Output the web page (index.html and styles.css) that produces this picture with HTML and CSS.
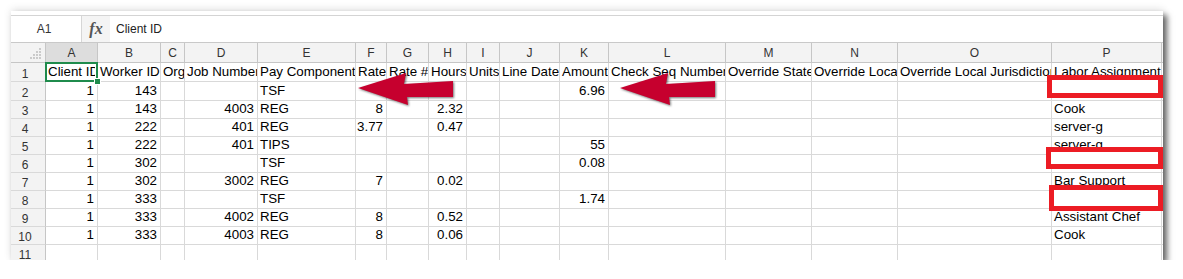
FILE: index.html
```html
<!DOCTYPE html>
<html lang="en">
<head>
<meta charset="utf-8">
<title>Sheet</title>
<link rel="stylesheet" href="styles.css">
</head>
<body>
<div class="sheet">
  <div class="topstrip"></div>
  <div class="fbar">
    <div class="namebox">A1</div>
    <div class="fx">fx</div>
    <div class="fval">Client ID</div>
  </div>
  <div class="grid">
    <div class="corner"><svg width="16" height="13" viewBox="0 0 16 13"><g fill="#b8b8b8"><circle cx="13" cy="2" r="0.9"/><circle cx="10" cy="5" r="0.9"/><circle cx="13" cy="5" r="0.9"/><circle cx="7" cy="8" r="0.9"/><circle cx="10" cy="8" r="0.9"/><circle cx="13" cy="8" r="0.9"/><circle cx="4" cy="11" r="0.9"/><circle cx="7" cy="11" r="0.9"/><circle cx="10" cy="11" r="0.9"/><circle cx="13" cy="11" r="0.9"/></g></svg></div>
    <div class="ch sel">A</div><div class="ch">B</div><div class="ch">C</div><div class="ch">D</div><div class="ch">E</div><div class="ch">F</div><div class="ch">G</div><div class="ch">H</div><div class="ch">I</div><div class="ch">J</div><div class="ch">K</div><div class="ch">L</div><div class="ch">M</div><div class="ch">N</div><div class="ch">O</div><div class="ch">P</div><div class="ch"></div>

    <div class="rh">1</div><div class="c active"><span class="t">Client ID</span></div><div class="c">Worker ID</div><div class="c">Org</div><div class="c">Job Number</div><div class="c">Pay Component</div><div class="c">Rate</div><div class="c">Rate #</div><div class="c">Hours</div><div class="c">Units</div><div class="c">Line Date</div><div class="c">Amount</div><div class="c">Check Seq Number</div><div class="c">Override State</div><div class="c">Override Local</div><div class="c">Override Local Jurisdiction</div><div class="c">Labor Assignment</div><div class="c"></div>

    <div class="rh">2</div><div class="c n">1</div><div class="c n">143</div><div class="c"></div><div class="c"></div><div class="c">TSF</div><div class="c"></div><div class="c"></div><div class="c"></div><div class="c"></div><div class="c"></div><div class="c n">6.96</div><div class="c"></div><div class="c"></div><div class="c"></div><div class="c"></div><div class="c"></div><div class="c"></div>

    <div class="rh">3</div><div class="c n">1</div><div class="c n">143</div><div class="c"></div><div class="c n">4003</div><div class="c">REG</div><div class="c n">8</div><div class="c"></div><div class="c n">2.32</div><div class="c"></div><div class="c"></div><div class="c"></div><div class="c"></div><div class="c"></div><div class="c"></div><div class="c"></div><div class="c">Cook</div><div class="c"></div>

    <div class="rh">4</div><div class="c n">1</div><div class="c n">222</div><div class="c"></div><div class="c n">401</div><div class="c">REG</div><div class="c n">3.77</div><div class="c"></div><div class="c n">0.47</div><div class="c"></div><div class="c"></div><div class="c"></div><div class="c"></div><div class="c"></div><div class="c"></div><div class="c"></div><div class="c">server-g</div><div class="c"></div>

    <div class="rh">5</div><div class="c n">1</div><div class="c n">222</div><div class="c"></div><div class="c n">401</div><div class="c">TIPS</div><div class="c"></div><div class="c"></div><div class="c"></div><div class="c"></div><div class="c"></div><div class="c n">55</div><div class="c"></div><div class="c"></div><div class="c"></div><div class="c"></div><div class="c">server-g</div><div class="c"></div>

    <div class="rh">6</div><div class="c n">1</div><div class="c n">302</div><div class="c"></div><div class="c"></div><div class="c">TSF</div><div class="c"></div><div class="c"></div><div class="c"></div><div class="c"></div><div class="c"></div><div class="c n">0.08</div><div class="c"></div><div class="c"></div><div class="c"></div><div class="c"></div><div class="c"></div><div class="c"></div>

    <div class="rh">7</div><div class="c n">1</div><div class="c n">302</div><div class="c"></div><div class="c n">3002</div><div class="c">REG</div><div class="c n">7</div><div class="c"></div><div class="c n">0.02</div><div class="c"></div><div class="c"></div><div class="c"></div><div class="c"></div><div class="c"></div><div class="c"></div><div class="c"></div><div class="c">Bar Support</div><div class="c"></div>

    <div class="rh">8</div><div class="c n">1</div><div class="c n">333</div><div class="c"></div><div class="c"></div><div class="c">TSF</div><div class="c"></div><div class="c"></div><div class="c"></div><div class="c"></div><div class="c"></div><div class="c n">1.74</div><div class="c"></div><div class="c"></div><div class="c"></div><div class="c"></div><div class="c"></div><div class="c"></div>

    <div class="rh">9</div><div class="c n">1</div><div class="c n">333</div><div class="c"></div><div class="c n">4002</div><div class="c">REG</div><div class="c n">8</div><div class="c"></div><div class="c n">0.52</div><div class="c"></div><div class="c"></div><div class="c"></div><div class="c"></div><div class="c"></div><div class="c"></div><div class="c"></div><div class="c">Assistant Chef</div><div class="c"></div>

    <div class="rh">10</div><div class="c n">1</div><div class="c n">333</div><div class="c"></div><div class="c n">4003</div><div class="c">REG</div><div class="c n">8</div><div class="c"></div><div class="c n">0.06</div><div class="c"></div><div class="c"></div><div class="c"></div><div class="c"></div><div class="c"></div><div class="c"></div><div class="c"></div><div class="c">Cook</div><div class="c"></div>

    <div class="rh">11</div><div class="c"></div><div class="c"></div><div class="c"></div><div class="c"></div><div class="c"></div><div class="c"></div><div class="c"></div><div class="c"></div><div class="c"></div><div class="c"></div><div class="c"></div><div class="c"></div><div class="c"></div><div class="c"></div><div class="c"></div><div class="c"></div><div class="c"></div>
  </div>

  <svg class="arrow arrow-1" width="106" height="42" viewBox="0 0 106 42"><polygon points="2,18 50,3 48,14 97,11 97,27 51,27 52,35" /></svg>
  <svg class="arrow arrow-2" width="106" height="42" viewBox="0 0 106 42"><polygon points="2,18 50,3 48,14 97,11 97,27 51,27 52,35" /></svg>

  <div class="mark mark-1"></div>
  <div class="mark mark-2"></div>
  <div class="mark mark-3"></div>
</div>
</body>
</html>
```

FILE: styles.css
```css
html, body {
  margin: 0;
  padding: 0;
  background: #ffffff;
}

body {
  font-family: "Liberation Sans", Arial, sans-serif;
}

.sheet {
  position: relative;
  margin: 11px 0 0 11px;
  width: 1152px;
  height: 249px;
  overflow: hidden;
  background: #ffffff;
  box-shadow: 4px 4px 6px rgba(0, 0, 0, 0.6), 0 -2px 8px rgba(0, 0, 0, 0.1);
}

.topstrip {
  height: 4px;
  border-bottom: 1px solid #d4d4d4;
}

.fbar {
  display: flex;
  height: 26px;
  border-bottom: 1px solid #c9c9c9;
}

.namebox {
  box-sizing: border-box;
  width: 71px;
  padding-right: 4px;
  border-right: 1px solid #d6d6d6;
  display: flex;
  align-items: center;
  justify-content: center;
  font-size: 12px;
  color: #333333;
}

.fx {
  width: 28px;
  background: #f4f4f4;
  display: flex;
  align-items: center;
  justify-content: center;
  font-family: "Liberation Serif", "Times New Roman", serif;
  font-style: italic;
  font-weight: bold;
  font-size: 16px;
  color: #555555;
  padding-bottom: 1px;
  box-sizing: border-box;
}

.fval {
  padding-left: 6px;
  display: flex;
  align-items: center;
  font-size: 12px;
  color: #222222;
}

.grid {
  display: grid;
  grid-template-columns: 35px 52px 63px 24px 73px 98px 31px 42px 38px 33px 60px 49px 117px 86px 86px 154px 110px 60px;
  grid-template-rows: 20px 19px 19px repeat(9, 18px);
}

.grid > div {
  box-sizing: border-box;
  border-right: 1px solid #d9d9d9;
  border-bottom: 1px solid #d9d9d9;
  overflow: hidden;
  white-space: nowrap;
  display: flex;
  align-items: flex-end;
}

.c {
  font-size: 13.33px;
  color: #000000;
  padding: 0 2px 2px 2px;
}

.n {
  justify-content: flex-end;
  padding-right: 3px;
}

.grid > .ch {
  background: #f3f3f3;
  border-color: #c6c6c6;
  justify-content: center;
  align-items: center;
  font-size: 12px;
  color: #333333;
  padding-top: 1px;
}

.grid > .ch.sel {
  background: #dddddd;
}

.grid > .corner {
  background: #f3f3f3;
  border-color: #c6c6c6;
  align-items: flex-start;
  justify-content: flex-end;
  padding: 4px 2px 0 0;
}

.grid > .rh {
  background: #f3f3f3;
  border-right-color: #c6c6c6;
  border-bottom-color: #d9d9d9;
  justify-content: center;
  font-size: 12px;
  color: #333333;
  padding: 0 6px 0 0;
  line-height: 13px;
}

.grid > .active {
  position: relative;
  overflow: visible;
}

.active .t {
  display: block;
  overflow: hidden;
  width: 100%;
}

.active::before {
  content: "";
  position: absolute;
  left: -1px;
  top: -1px;
  right: -1px;
  bottom: -1px;
  border: 2px solid #1f8b4c;
}

.active::after {
  content: "";
  position: absolute;
  right: -4px;
  bottom: -4px;
  width: 5px;
  height: 5px;
  background: #1f8b4c;
  border: 1px solid #ffffff;
}

.arrow {
  position: absolute;
  filter: drop-shadow(1.5px 1.5px 1px rgba(0, 0, 0, 0.55));
}

.arrow polygon {
  fill: #c6002e;
}

.arrow-1 {
  left: 345px;
  top: 59px;
}

.arrow-2 {
  left: 607px;
  top: 59px;
}

.mark {
  position: absolute;
  box-sizing: border-box;
  border: 5px solid #ec1c24;
  background: #ffffff;
}

.mark-1 {
  left: 1036px;
  top: 64px;
  width: 116px;
  height: 23px;
}

.mark-2 {
  left: 1035px;
  top: 136px;
  width: 117px;
  height: 22px;
}

.mark-3 {
  left: 1038px;
  top: 174px;
  width: 114px;
  height: 26px;
}
```
